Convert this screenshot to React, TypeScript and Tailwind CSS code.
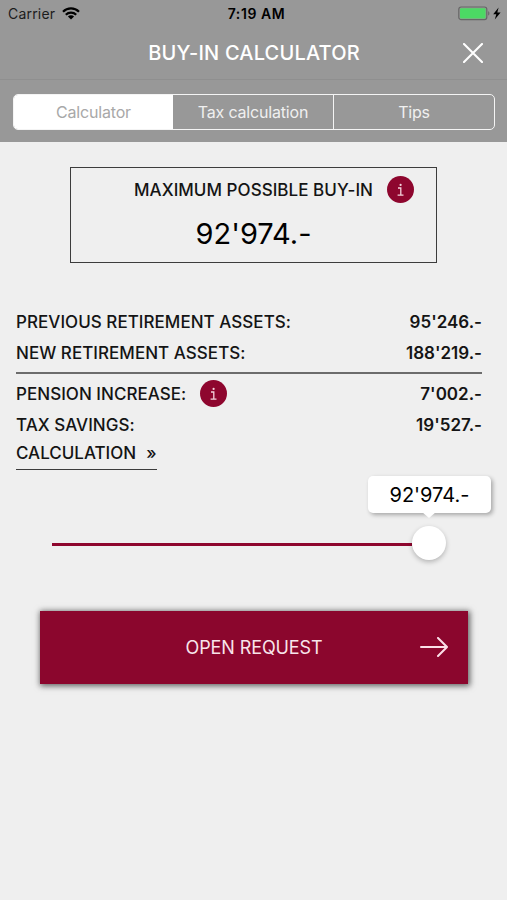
import { clsx } from "clsx";

const tabs = ["Calculator", "Tax calculation", "Tips"];

function InfoBadge() {
  return (
    <button
      type="button"
      aria-label="Info"
      className="flex size-[27px] shrink-0 items-center justify-center rounded-full bg-[#8e062e]"
    >
      <svg width="9" height="14" viewBox="0 0 9 14" fill="none" stroke="#f3d3dc" strokeWidth="1.3">
        <path d="M2 5h2.8v7M1.6 12.2h5.9" />
        <circle cx="4.6" cy="1.9" r="1.1" fill="#f3d3dc" stroke="none" />
      </svg>
    </button>
  );
}

function StatusBar() {
  return (
    <div className="flex h-[27px] items-center text-black">
      <div className="flex flex-1 items-center gap-[7px] pl-2">
        <span className="text-[14px] tracking-[0.2px] text-[#1c1c1c]">Carrier</span>
        <svg width="18" height="13" viewBox="0 0 18 13" fill="none" stroke="currentColor" strokeWidth="2.2">
          <path d="M1 4.7a11.4 11.4 0 0 1 16 0M3.8 7.7a7.4 7.4 0 0 1 10.4 0" />
          <path d="M9 12.5 5.9 9.5a4.4 4.4 0 0 1 6.2 0z" fill="currentColor" stroke="none" />
        </svg>
      </div>
      <span className="pl-1 text-[14px] font-semibold tracking-[0.6px]">7:19 AM</span>
      <div className="flex flex-1 items-center justify-end pr-[6px]">
        <svg width="43" height="15" viewBox="0 0 43 15">
          <rect x="0.8" y="1" width="28" height="12.6" rx="2.4" fill="none" stroke="#666" strokeWidth="1.2" />
          <rect x="2" y="2.2" width="25.6" height="10.2" rx="1" fill="#4cd964" />
          <path d="M30.2 5.2c1.6.6 1.6 3.8 0 4.4z" fill="#666" />
          <path d="M40.6 1.5 35.2 8.2h3.1l-1.5 5.3 5.8-7h-3.3z" fill="#000" />
        </svg>
      </div>
    </div>
  );
}

function Row({ label, value, info }: { label: string; value: string; info?: boolean }) {
  return (
    <div className="flex h-[31px] items-center justify-between">
      <div className="flex items-center gap-[14px]">
        <span className="pt-[2px] tracking-[0.04px]">{label}</span>
        {info && <InfoBadge />}
      </div>
      <span className="pt-[2px] font-semibold">{value}</span>
    </div>
  );
}

export default function App() {
  return (
    <div className="min-h-screen w-full bg-[#efefef] font-['Inter',sans-serif] text-[#141414]">
      <header className="h-[142px] bg-[#989898]">
        <StatusBar />
        <div className="flex h-[53px] items-center border-b border-[#8f8f8f] pr-[24px] pl-[45px]">
          <h1 className="flex-1 text-center text-[20px] font-medium tracking-[0.18px] text-white">
            BUY-IN CALCULATOR
          </h1>
          <button type="button" aria-label="Close">
            <svg width="20" height="20" viewBox="0 0 20 20" stroke="#fff" strokeWidth="2.1" strokeLinecap="round">
              <path d="M1 1l18 18M19 1L1 19" />
            </svg>
          </button>
        </div>
        <div className="mr-[12px] ml-[13px] mt-[14px] grid h-9 grid-cols-[159px_1fr_161px] overflow-hidden rounded-[5px] border border-[#f4f4f4]">
          {tabs.map((tab, i) => (
            <button
              key={tab}
              type="button"
              className={clsx(
                "text-[16px] tracking-[-0.18px]",
                i === 0 ? "bg-white text-[#a8a8a8]" : "text-[#f0f0f0]",
                i === 2 && "border-l border-[#f4f4f4]",
              )}
            >
              {tab}
            </button>
          ))}
        </div>
      </header>

      <main>
        <section className="mx-auto mt-[25px] h-24 w-[367px] border-[1.5px] border-[#3c3c3c] pt-2">
          <div className="flex items-center justify-end gap-[14px] pr-[22px]">
            <h2 className="pt-[2px] text-[17px] font-medium tracking-[0.04px]">MAXIMUM POSSIBLE BUY-IN</h2>
            <InfoBadge />
          </div>
          <p className="mt-[8px] text-center text-[29px] leading-[44px] text-black">92'974.-</p>
        </section>

        <section className="mr-[25px] ml-4 mt-[43px] text-[17px] font-medium">
          <Row label="PREVIOUS RETIREMENT ASSETS:" value="95'246.-" />
          <Row label="NEW RETIREMENT ASSETS:" value="188'219.-" />
          <div className="mt-[4px] mb-[4px] h-[2px] bg-[#6c6c6c]" />
          <Row label="PENSION INCREASE:" value="7'002.-" info />
          <Row label="TAX SAVINGS:" value="19'527.-" />
          <a className="flex h-[30px] w-[141px] items-center gap-[10px] border-b-[1.5px] border-[#3c3c3c] pb-[2px]">
            CALCULATION <span>»</span>
          </a>
        </section>

        <section className="mt-[6px] ml-[52px] w-[394px]">
          <div className="relative ml-[316px] flex h-[37px] w-[123px] items-center justify-center rounded-[5px] bg-white text-[20px] text-black shadow-[2px_2px_4px_rgba(0,0,0,0.3)]">
            92'974.-
            <svg className="absolute top-[36px] left-[54px]" width="14" height="6" viewBox="0 0 14 6">
              <path d="M0 0h14L7 6z" fill="#fff" />
            </svg>
          </div>
          <div className="mt-[13px] flex h-[34px] items-center">
            <div className="mt-[3px] h-[3px] flex-1 bg-[#8e062e]" />
            <div className="size-[34px] rounded-full bg-white shadow-[0_2px_5px_rgba(0,0,0,0.25)]" />
          </div>
        </section>

        <button
          type="button"
          className="mt-[51px] ml-10 flex h-[73px] w-[428px] items-center bg-[#8b062d] pr-5 pl-[48px] text-[18px] tracking-[-0.1px] text-[#f8e4ea] shadow-[1px_1px_6px_1px_rgba(0,0,0,0.6)]"
        >
          <span className="flex-1">OPEN REQUEST</span>
          <svg className="mb-px" width="28" height="20" viewBox="0 0 28 20" fill="none" stroke="#fbdfe7" strokeWidth="2" strokeLinecap="round">
            <path d="M1 10h26M18 1l9 9-9 9" />
          </svg>
        </button>
      </main>
    </div>
  );
}
